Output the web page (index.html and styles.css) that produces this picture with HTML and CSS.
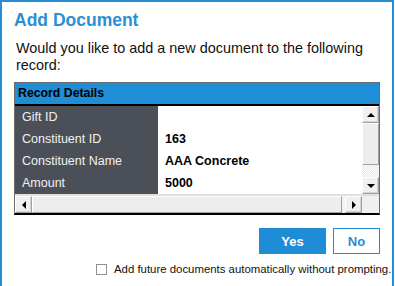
FILE: index.html
```html
<!DOCTYPE html>
<html lang="en">
<head>
  <meta charset="UTF-8">
  <title>Add Document</title>
  <link rel="stylesheet" href="styles.css">
</head>
<body>
  <div class="dialog">
    <h1 class="title">Add Document</h1>
    <p class="prompt">Would you like to add a new document to the following record:</p>

    <div class="grid">
      <div class="grid-head">Record Details</div>
      <div class="grid-body">
        <div class="rows">
          <div class="row"><span class="label">Gift ID</span><span class="value"></span></div>
          <div class="row"><span class="label">Constituent ID</span><span class="value">163</span></div>
          <div class="row"><span class="label">Constituent Name</span><span class="value">AAA Concrete</span></div>
          <div class="row"><span class="label">Amount</span><span class="value">5000</span></div>
        </div>
        <div class="vscroll">
          <div class="sb-btn"><span class="arr up"></span></div>
          <div class="sb-thumb"></div>
          <div class="sb-track"></div>
          <div class="sb-btn"><span class="arr down"></span></div>
        </div>
      </div>
      <div class="hscroll">
        <div class="sb-btn"><span class="arr left"></span></div>
        <div class="sb-thumb"></div>
        <div class="sb-track"></div>
        <div class="sb-btn"><span class="arr right"></span></div>
        <div class="corner"></div>
      </div>
    </div>

    <div class="actions">
      <button class="btn btn-yes">Yes</button>
      <button class="btn btn-no">No</button>
    </div>

    <label class="auto">
      <span class="box"></span>
      Add future documents automatically without prompting.
    </label>
  </div>
</body>
</html>
```

FILE: styles.css
```css
body {
  margin: 0;
  background: #fff;
  font-family: "Liberation Sans", Arial, sans-serif;
}
.dialog {
  width: 378px;
  height: 290px;
  border: 2px solid #2a8dd4;
  border-bottom: none;
  padding: 0 0 0 12px;
  box-sizing: content-box;
}
.title {
  margin: 0;
  padding-top: 7px;
  font-size: 17.5px;
  font-weight: bold;
  color: #2b8fd6;
  line-height: 22px;
}
.prompt {
  margin: 9px 0 0 2px;
  width: 362px;
  font-size: 14.4px;
  line-height: 17px;
  color: #111;
}
.grid {
  margin-top: 8px;
  width: 364px;
  border: 1px solid #6d6d6d;
  border-bottom: 2px solid #000;
}
.grid-head {
  background: #1e8ed6;
  height: 21px;
  line-height: 21px;
  padding-left: 3px;
  font-size: 12.3px;
  font-weight: bold;
  color: #000;
  border-bottom: 2px solid #000;
}
.grid-body {
  display: flex;
}
.rows {
  flex: 1;
}
.row {
  display: flex;
  height: 22px;
  line-height: 22px;
  font-size: 12.5px;
}
.label {
  width: 136px;
  padding-left: 7px;
  background: #4b4f57;
  color: #f2f2f2;
}
.value {
  flex: 1;
  padding-left: 7px;
  font-weight: bold;
  color: #000;
}
.vscroll {
  width: 17px;
  display: flex;
  flex-direction: column;
  background: #f0f0f0;
}
.sb-btn {
  width: 15px;
  height: 15px;
  border: 1px solid #a0a0a0;
  border-top-color: #fff;
  border-left-color: #fff;
  background: #f0f0f0;
  display: flex;
  align-items: center;
  justify-content: center;
  box-shadow: inset -1px -1px 0 #d4d4d4;
}
.vscroll .sb-thumb {
  height: 40px;
  border: 1px solid #a0a0a0;
  border-top-color: #fff;
  border-left-color: #fff;
  background: #ededed;
}
.vscroll .sb-track {
  flex: 1;
  background: repeating-conic-gradient(#fff 0 25%, #e6e6e6 0 50%) 0 0 / 2px 2px;
}
.hscroll {
  display: flex;
  height: 17px;
  background: #f0f0f0;
  border-top: 2px solid #e0e0e0;
}
.hscroll .sb-thumb {
  width: 308px;
  border: 1px solid #a0a0a0;
  border-top-color: #fff;
  border-left-color: #fff;
  background: #ededed;
}
.hscroll .sb-track {
  flex: 1;
  background: repeating-conic-gradient(#fff 0 25%, #e6e6e6 0 50%) 0 0 / 2px 2px;
}
.corner {
  width: 17px;
  background: #f0f0f0;
}
.arr {
  width: 0;
  height: 0;
  border: 4px solid transparent;
}
.arr.up { border-bottom-color: #000; border-top-width: 0; }
.arr.down { border-top-color: #000; border-bottom-width: 0; }
.arr.left { border-right-color: #000; border-left-width: 0; }
.arr.right { border-left-color: #000; border-right-width: 0; }
.actions {
  display: flex;
  justify-content: flex-end;
  gap: 7px;
  margin-top: 13px;
  width: 366px;
}
.btn {
  height: 26px;
  font-family: "Liberation Sans", Arial, sans-serif;
  font-size: 13px;
  font-weight: bold;
  padding: 0;
  border: 1px solid #1f8dd6;
}
.btn-yes {
  width: 67px;
  background: #1f8dd6;
  color: #fff;
}
.btn-no {
  width: 47px;
  background: #fff;
  color: #1f8dd6;
}
.auto {
  display: flex;
  align-items: center;
  margin: 9px 0 0 82px;
  font-size: 11.4px;
  color: #111;
  white-space: nowrap;
}
.box {
  flex: none;
  width: 11px;
  height: 11px;
  box-sizing: border-box;
  border: 1px solid #8f8f8f;
  background: #fff;
  margin-right: 7px;
}
```
